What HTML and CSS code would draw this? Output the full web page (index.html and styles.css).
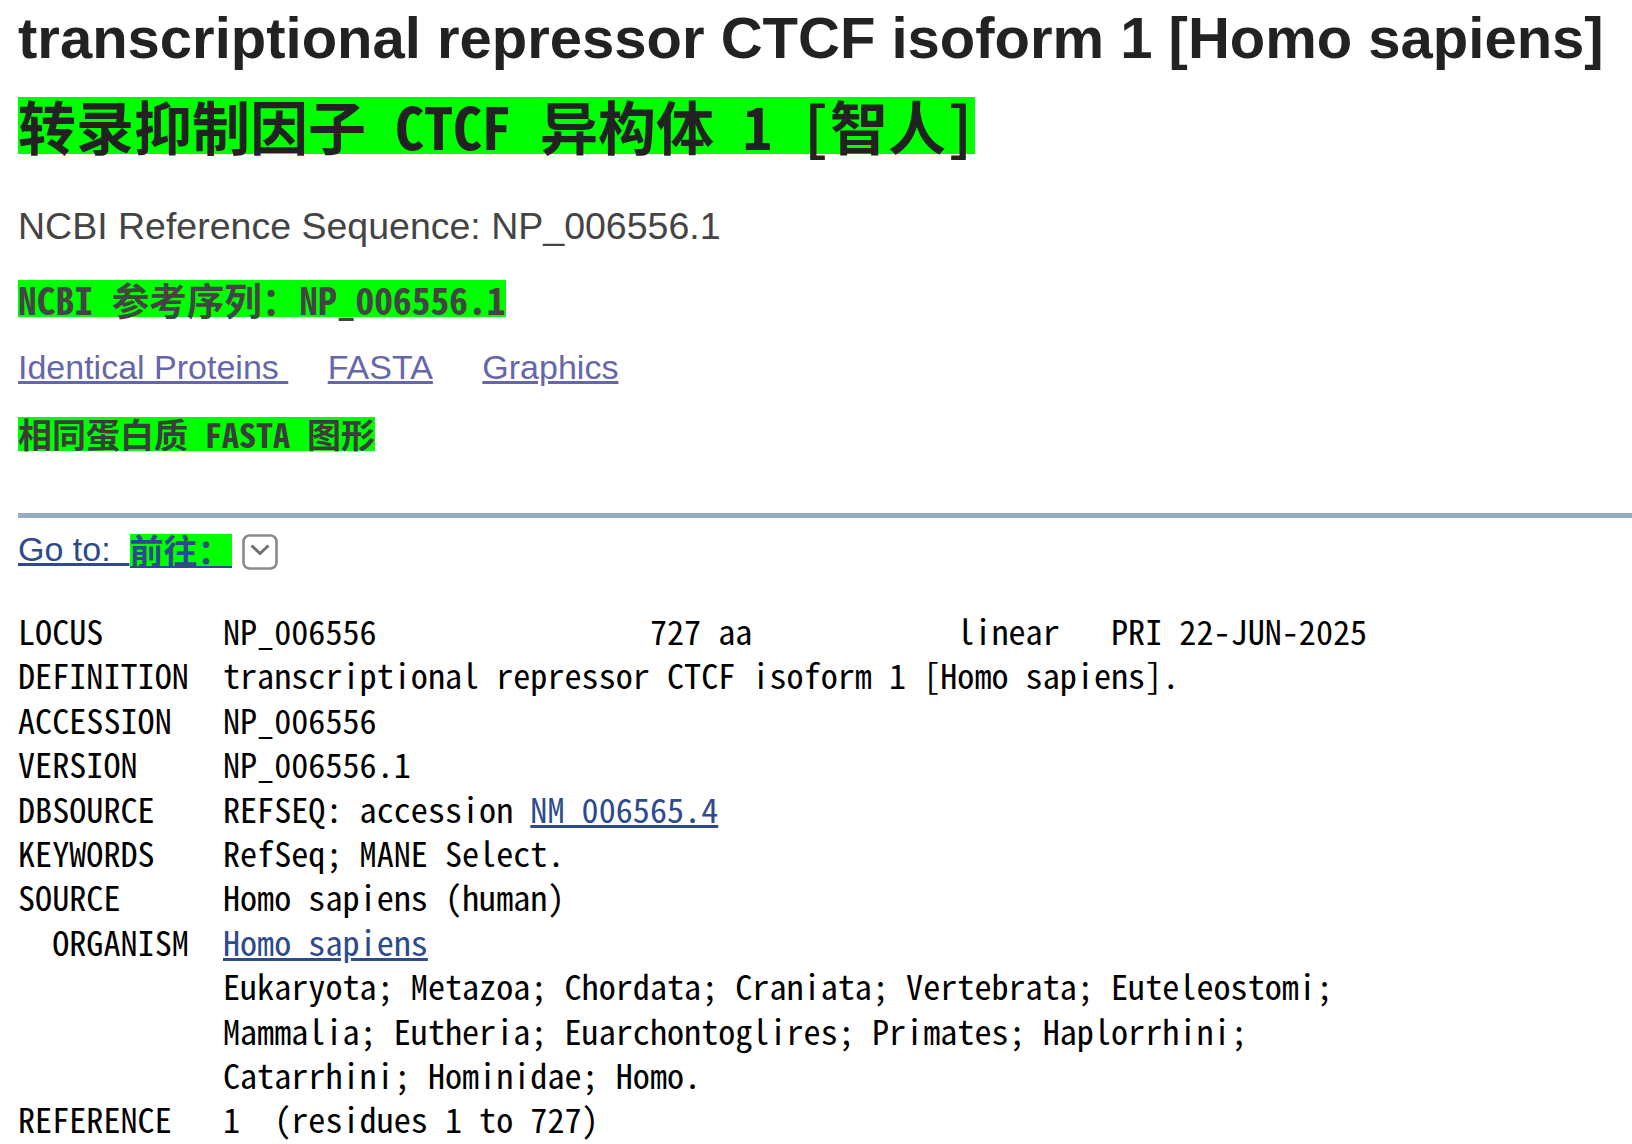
FILE: index.html
```html
<!DOCTYPE html>
<html>
<head>
    <title>transcriptional repressor CTCF isoform 1 [Homo sapiens] - Protein - NCBI</title>
    <link rel="stylesheet" href="styles.css">
</head>
<body>
    <div class="page">
        <h1 class="title">transcriptional repressor CTCF isoform 1 [Homo sapiens]</h1>
        <div class="tr tr-title">转录抑制因子 CTCF 异构体 1 [智人]</div>

        <p class="refseq">NCBI Reference Sequence: NP_006556.1</p>
        <div class="tr tr-refseq">NCBI 参考序列：NP_006556.1</div>

        <p class="links">
            <a href="#" class="first">Identical Proteins&nbsp;</a>
            <a href="#" class="fasta">FASTA</a>
            <a href="#">Graphics</a>
        </p>
        <div class="tr tr-links">相同蛋白质 FASTA 图形</div>

        <hr class="rule">

        <div class="goto">
            <a href="#">Go to:&nbsp; <span class="tr tr-goto">前往：</span></a>
            <span class="toggle">
                <svg width="36" height="36" viewBox="0 0 36 36">
                    <rect x="1.5" y="1.5" width="33" height="33" rx="6" fill="#fff" stroke="#8a8a8a" stroke-width="2.6"/>
                    <polyline points="9.5,11.5 18,19.5 26.5,11.5" fill="none" stroke="#707070" stroke-width="3"/>
                </svg>
            </span>
        </div>

<pre class="genbank">LOCUS       NP_006556                727 aa            linear   PRI 22-JUN-2025
DEFINITION  transcriptional repressor CTCF isoform 1 [Homo sapiens].
ACCESSION   NP_006556
VERSION     NP_006556.1
DBSOURCE    REFSEQ: accession <a href="#">NM_006565.4</a>
KEYWORDS    RefSeq; MANE Select.
SOURCE      Homo sapiens (human)
  ORGANISM  <a href="#">Homo sapiens</a>
            Eukaryota; Metazoa; Chordata; Craniata; Vertebrata; Euteleostomi;
            Mammalia; Eutheria; Euarchontoglires; Primates; Haplorrhini;
            Catarrhini; Hominidae; Homo.
REFERENCE   1  (residues 1 to 727)</pre>
    </div>
</body>
</html>
```

FILE: styles.css
```css
body {
    margin: 0;
    background-color: #fff;
    font-family: "Liberation Sans", Arial, sans-serif;
    color: #444;
}
.page {
    padding-left: 18px;
}
.title {
    margin: 4px 0 0;
    font-size: 58px;
    line-height: 67px;
    font-weight: bold;
    color: #222;
    white-space: nowrap;
}
.tr {
    width: fit-content;
    background-color: #00ff00;
    font-family: "Noto Sans Mono CJK SC", "Noto Sans CJK SC", monospace;
    font-weight: bold;
    white-space: nowrap;
}
.tr-title {
    margin-top: 26px;
    font-size: 58px;
    line-height: 57px;
    color: #222;
}
.refseq {
    margin: 51px 0 0;
    font-size: 37.5px;
    line-height: 43px;
    color: #444;
}
.tr-refseq {
    margin-top: 32px;
    font-size: 37.5px;
    line-height: 37px;
    color: #444;
}
.links {
    margin: 31px 0 0;
    font-size: 34px;
    line-height: 39px;
}
.links a {
    color: #6666aa;
    margin-right: 30px;
}
.links a.fasta {
    margin-right: 40px;
}
.tr-links {
    margin-top: 30px;
    font-size: 34px;
    line-height: 34px;
    color: #3c3c3c;
}
.rule {
    margin: 62px 0 0 0;
    height: 5px;
    border: 0;
    background-color: #97aac4;
}
.goto {
    margin-top: 12px;
    font-size: 34px;
    line-height: 39px;
    white-space: nowrap;
}
.goto a {
    color: #2f4a8c;
}
.tr-goto {
    display: inline-block;
    font-size: 34px;
    line-height: 32px;
    color: #2f4a8c;
    border-bottom: 2px solid #2f4a8c;
    vertical-align: -3px;
}
.toggle {
    display: inline-block;
    margin-left: 1px;
    vertical-align: -9px;
}
.toggle svg {
    display: block;
}
.genbank {
    margin: 38px 0 0;
    font-family: "Noto Sans Mono CJK SC", "Liberation Mono", monospace;
    font-size: 34.16px;
    line-height: 44.4px;
    color: #000;
}
.genbank a {
    color: #2f4a8c;
}
```
